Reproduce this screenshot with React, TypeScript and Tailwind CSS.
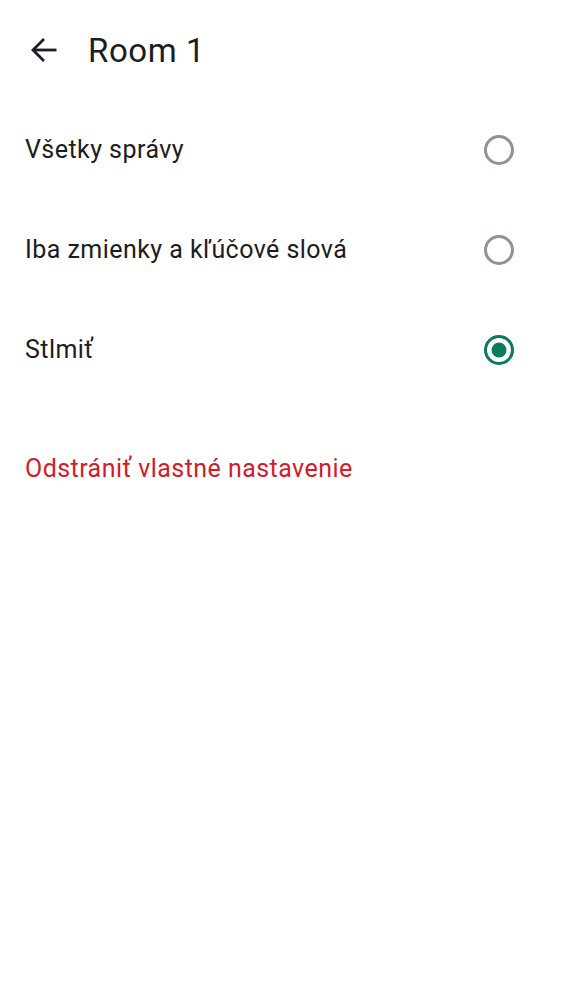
import React from "react";

const font = { fontFamily: "Roboto, 'Noto Sans', sans-serif" };

function Radio({ checked }: { checked?: boolean }) {
  return (
    <svg width="34" height="34" viewBox="0 0 34 34">
      <circle cx="17" cy="17" r="13.5" fill="none" stroke={checked ? "#0b7a5f" : "#8d939b"} strokeWidth="3" />
      {checked && <circle cx="17" cy="17" r="7.5" fill="#0b7a5f" />}
    </svg>
  );
}

export default function App() {
  const items = [
    { label: "Všetky správy", checked: false },
    { label: "Iba zmienky a kľúčové slová", checked: false },
    { label: "Stlmiť", checked: true },
  ];
  return (
    <div className="w-[562px] h-[1000px] bg-white text-[#1b1d22]" style={font}>
      <div className="flex items-center h-[100px] pl-[29px]">
        <svg width="30" height="30" viewBox="0 0 30 30" className="shrink-0">
          <path d="M4 15H27.5" stroke="#1b1d22" strokeWidth="2.8" fill="none" />
          <path d="M15 4L4 15L15 26" stroke="#1b1d22" strokeWidth="2.8" fill="none" strokeLinejoin="miter" />
        </svg>
        <span className="ml-[29px] text-[33px] leading-none tracking-[0.6px]">Room 1</span>
      </div>
      <div className="flex flex-col">
        {items.map((it) => (
          <div key={it.label} className="flex items-center justify-between h-[100px] pl-[25px] pr-[46px]">
            <span className="text-[25px] tracking-[0.45px]">{it.label}</span>
            <Radio checked={it.checked} />
          </div>
        ))}
      </div>
      <div className="mt-[30px] h-[78px] flex items-center pl-[25px]">
        <span className="text-[25px] text-[#d51a2a] tracking-[0.45px]">Odstrániť vlastné nastavenie</span>
      </div>
    </div>
  );
}
